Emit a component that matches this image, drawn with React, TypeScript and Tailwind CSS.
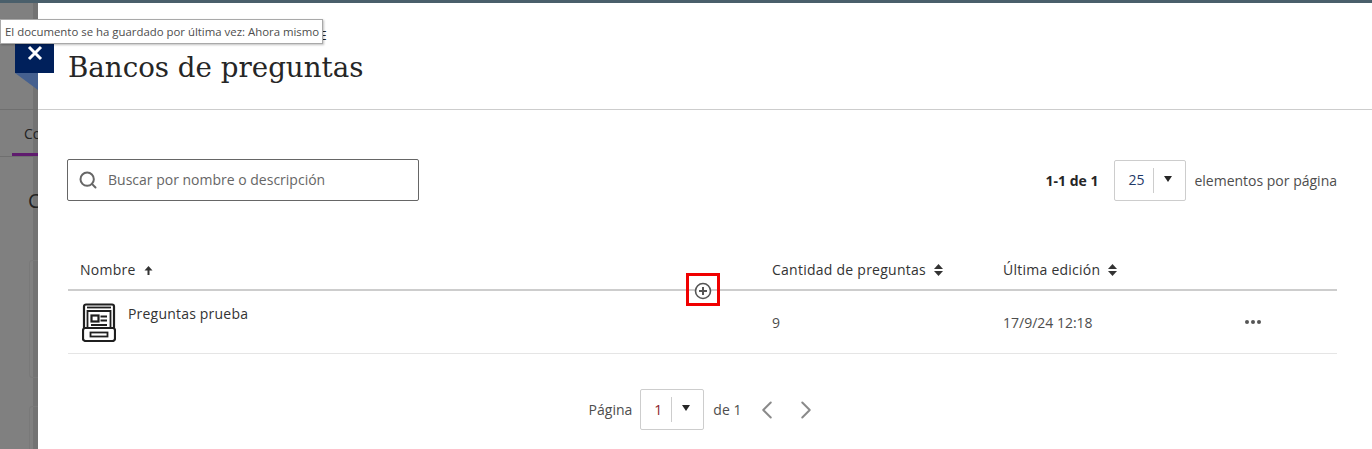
import { ChevronLeft, ChevronRight, Search } from "lucide-react";

function SortIcon() {
  return (
    <svg width="9" height="12" viewBox="0 0 9 12" className="ml-2 fill-[#333]">
      <path d="M4.500 0 9 5H0z" />
      <path d="M4.500 12 0 7h9z" />
    </svg>
  );
}

function Caret() {
  return (
    <svg width="8" height="6" viewBox="0 0 8 6" className="fill-[#262626]">
      <path d="M0 0h8L4 6z" />
    </svg>
  );
}

function BankIcon() {
  return (
    <svg width="34" height="39" viewBox="0 0 34 39" fill="none" stroke="#1f1f1f" strokeWidth="2.200">
      <path d="M2 25V3.500A2 2 0 0 1 4 1.500h26a2 2 0 0 1 2 2V25" />
      <path d="M5 4.500h24" strokeWidth="1.800" />
      <path d="M5.500 25V8h23v17" strokeWidth="1.800" />
      <rect x="9.500" y="12.500" width="7" height="6" />
      <path d="M18.500 13.500h6.500M18.500 17.500h6.500M9 22h16" strokeWidth="1.800" />
      <rect x="1" y="25" width="32" height="13" rx="2.500" />
      <rect x="8.500" y="29.500" width="17" height="4" strokeWidth="1.800" />
    </svg>
  );
}

export default function App() {
  return (
    <div className="relative flex h-[449px] w-[1372px] flex-col overflow-hidden bg-white font-['Open_Sans',sans-serif] text-[14px] text-[#262626]">
      <div className="h-[3px] shrink-0 bg-[#4a5f6b]" />

      <div className="flex min-h-0 flex-1">
        {/* page behind the panel, dimmed */}
        <div className="relative w-[38px] shrink-0 overflow-hidden bg-[#808080] shadow-[inset_-5px_0_0_rgba(0,0,0,0.1)]">
          <div className="absolute left-0 top-[106px] h-px w-full bg-[#6f6f6f]" />
          <span className="absolute left-[24px] top-[120px] text-[14px] text-[#222]">Co</span>
          <div className="absolute left-[12px] top-[150px] h-[3px] w-full bg-[#5f1b6e]" />
          <div className="absolute left-0 top-[153px] h-px w-full bg-[#6f6f6f]" />
          <span className="absolute left-[28px] top-[183px] text-[20px] text-[#222]">C</span>
          <div className="absolute left-[29px] top-[257px] h-[118px] w-[20px] rounded-[3px] border border-[#797979]" />
          <div className="absolute left-[29px] top-[403px] h-[80px] w-[20px] rounded-[3px] border border-[#797979]" />
          <div className="absolute left-[15px] top-[70px] h-0 w-0 border-l-[23px] border-t-[17px] border-l-transparent border-t-[#45608f]" />
        </div>

        <main className="relative min-w-0 flex-1">
          <span className="absolute left-[282px] top-[24px] text-[12px] text-[#262626]">E</span>
          <header className="flex h-[107px] items-start border-b border-[#cdcdcd] pl-[30px] pt-[45px]">
            <h1 className="font-['DejaVu_Serif',serif] text-[27.700px] leading-[40px] text-[#262626]">Bancos de preguntas</h1>
          </header>

          <div className="flex items-center justify-between pl-[29px] pr-[35px] pt-[49px]">
            <div className="flex h-[42px] w-[352px] items-center rounded-[2px] border border-[#666] pl-[10px] text-[#666]">
              <Search size={20} strokeWidth={2.400} />
              <span className="ml-[10px] -mt-[2px]">Buscar por nombre o descripción</span>
            </div>
            <div className="flex items-center">
              <span className="font-bold">1-1 de 1</span>
              <div className="ml-[16px] flex h-[41px] w-[72px] items-center rounded-[2px] border border-[#cdcdcd] pl-[13px]">
                <span className="-mt-[2px] text-[#1f3a68]">25</span>
                <div className="ml-[9px] h-[25px] w-px bg-[#cdcdcd]" />
                <div className="ml-[10px] -mt-[3px]"><Caret /></div>
              </div>
              <span className="ml-[8px] text-[#4d4d4d]">elementos por página</span>
            </div>
          </div>

          <div className="relative ml-[30px] mr-[35px] mt-[41px]">
            <div className="flex h-[49px] items-center border-b-2 border-[#cdcdcd] pt-[8px] font-medium tracking-[0.25px] text-[#333]">
              <div className="flex w-[704px] items-center pl-[12px]">
                Nombre
                <svg width="9" height="10" viewBox="0 0 9 10" className="ml-2 fill-[#333]">
                  <path d="M4.500 1 8.500 5.500H5.500V10H3.500V5.500H.5z" />
                </svg>
              </div>
              <div className="flex w-[231px] items-center">Cantidad de preguntas<SortIcon /></div>
              <div className="flex items-center">Última edición<SortIcon /></div>
            </div>

            <div className="flex h-[63px] items-center border-b border-[#e5e5e5] text-[#4d4d4d]">
              <div className="flex w-[704px] items-start pl-[14px]">
                <BankIcon />
                <span className="ml-[12px] font-medium tracking-[0.2px] text-[#333]">Preguntas prueba</span>
              </div>
              <div className="w-[231px]">9</div>
              <div className="w-[242px]">17/9/24 12:18</div>
              <div className="flex gap-[2px]">
                <span className="size-[4px] rounded-full bg-[#555]" />
                <span className="size-[4px] rounded-full bg-[#555]" />
                <span className="size-[4px] rounded-full bg-[#555]" />
              </div>
            </div>

            {/* red annotation over the header rule */}
            <div className="absolute left-[618px] top-[31px] flex h-[33px] w-[34px] items-center justify-center border-[3px] border-[#f00000] pt-[3px]">
              <svg width="18" height="18" viewBox="0 0 18 18" fill="#fff" stroke="#555" strokeWidth="1.600">
                <circle cx="9" cy="9" r="7.500" />
                <path d="M9 5v8M5 9h8" strokeWidth="2" />
              </svg>
            </div>
          </div>

          <nav className="mt-[35px] flex items-center justify-center text-[#4d4d4d]">
            <span>Página</span>
            <div className="ml-[8px] flex h-[41px] w-[64px] items-center rounded-[2px] border border-[#cdcdcd] pl-[13px]">
              <span className="-mt-[1px] text-[#8c1c2c]">1</span>
              <div className="ml-[9px] h-[25px] w-px bg-[#cdcdcd]" />
              <div className="ml-[10px] -mt-[3px]"><Caret /></div>
            </div>
            <span className="ml-[9px]">de 1</span>
            <ChevronLeft size={30} strokeWidth={1.600} className="ml-[11px] text-[#8a8a8a]" />
            <ChevronRight size={30} strokeWidth={1.600} className="ml-[9px] text-[#8a8a8a]" />
          </nav>
        </main>
      </div>

      {/* close tab, sits over the panel edge */}
      <div className="absolute left-[15px] top-[33px] flex h-[40px] w-[39px] items-center justify-center bg-[#00205b]">
        <svg width="16" height="16" viewBox="0 0 16 16" stroke="#fff" strokeWidth="3"><path d="M2 2l12 12M14 2 2 14" /></svg>
      </div>

      {/* browser tooltip */}
      <div className="absolute left-0 top-[19px] flex h-[25px] w-[323px] items-center whitespace-nowrap border border-[#a9a9a9] bg-white pl-[4px] text-[11.400px] text-[#4d4d4d] shadow-[1px_1px_2px_rgba(0,0,0,0.25)]">
        El documento se ha guardado por última vez: Ahora mismo
      </div>
    </div>
  );
}
